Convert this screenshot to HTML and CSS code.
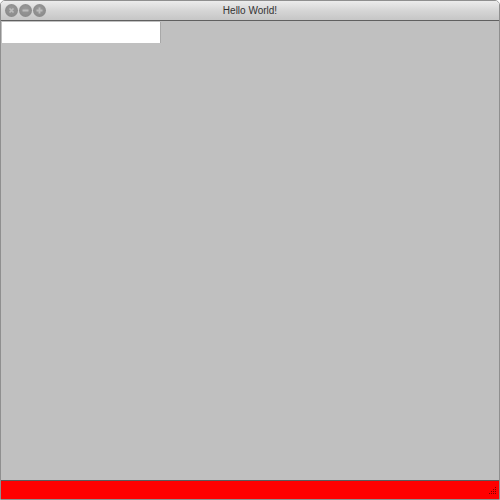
FILE: index.html
```html
<!DOCTYPE html>
<html>
<head>
<meta charset="utf-8">
<link rel="stylesheet" href="styles.css">
</head>
<body>
<div class="window">
  <div class="titlebar">
    <div class="buttons">
      <span class="btn"><svg width="13" height="13" viewBox="0 0 13 13"><path d="M4.5 4.5L8.5 8.5M8.5 4.5L4.5 8.5" stroke="#bdbdbd" stroke-width="1.6"/></svg></span>
      <span class="btn"><svg width="13" height="13" viewBox="0 0 13 13"><path d="M3.5 6.5H9.5" stroke="#bdbdbd" stroke-width="1.8"/></svg></span>
      <span class="btn"><svg width="13" height="13" viewBox="0 0 13 13"><path d="M3.5 6.5H9.5M6.5 3.5V9.5" stroke="#bdbdbd" stroke-width="1.8"/></svg></span>
    </div>
    <div class="title">Hello World!</div>
  </div>
  <div class="content">
    <div class="field"></div>
  </div>
  <div class="statusbar">
    <svg class="grip" width="10" height="10" viewBox="0 0 10 10">
      <g fill="#7a0000">
        <rect x="8" y="0" width="1" height="1"/>
        <rect x="6" y="2" width="1" height="1"/><rect x="8" y="2" width="1" height="1"/>
        <rect x="4" y="4" width="1" height="1"/><rect x="6" y="4" width="1" height="1"/><rect x="8" y="4" width="1" height="1"/>
        <rect x="2" y="6" width="1" height="1"/><rect x="4" y="6" width="1" height="1"/><rect x="6" y="6" width="1" height="1"/><rect x="8" y="6" width="1" height="1"/>
      </g>
    </svg>
  </div>
</div>
</body>
</html>
```
FILE: styles.css
```css
html, body {
  margin: 0;
  padding: 0;
  width: 500px;
  height: 500px;
  background: #ffffff;
  overflow: hidden;
}
.window {
  box-sizing: border-box;
  width: 500px;
  height: 500px;
  border: 1px solid #8f8f8f;
  border-radius: 5px 5px 0 0;
  display: flex;
  flex-direction: column;
  overflow: hidden;
  font-family: "Liberation Sans", Arial, sans-serif;
}
.titlebar {
  height: 19px;
  flex: none;
  position: relative;
  display: flex;
  align-items: center;
  justify-content: center;
  background: linear-gradient(#ececec, #d6d6d6 50%, #c6c6c6);
  border-bottom: 1px solid #606060;
}
.buttons {
  position: absolute;
  left: 4px;
  top: 3px;
  display: flex;
  gap: 1px;
}
.btn {
  width: 13px;
  height: 13px;
  border-radius: 50%;
  background: radial-gradient(circle at 50% 40%, #9a9a9a, #858585);
  display: flex;
}
.title {
  font-size: 10px;
  color: #333333;
  line-height: 19px;
}
.content {
  flex: 1;
  background: #c0c0c0;
  padding: 1px 0 0 1px;
}
.field {
  width: 158px;
  height: 21px;
  background: #ffffff;
  border-right: 1px solid #a8a8a8;
}
.statusbar {
  flex: none;
  height: 18px;
  background: #ff0000;
  border-top: 1px solid #5a5a5a;
  position: relative;
}
.grip {
  position: absolute;
  right: 2px;
  bottom: 2px;
}
```
